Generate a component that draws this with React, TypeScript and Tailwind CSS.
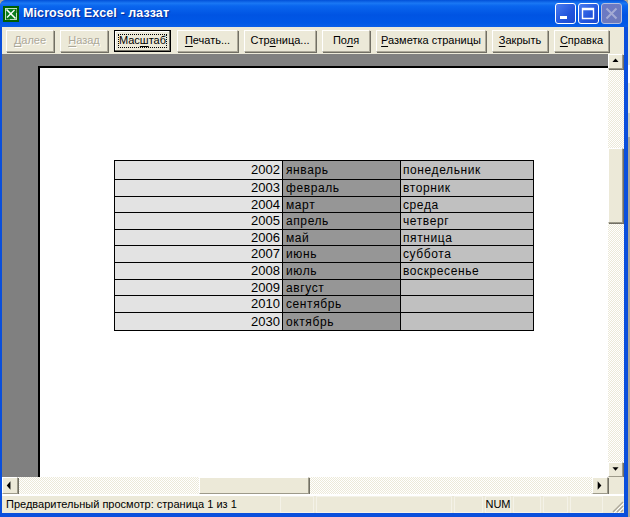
const uiFont = "font-['Liberation_Sans',sans-serif]";
const dither = "bg-[repeating-conic-gradient(#ece9d8_0_25%,#ffffff_0_50%)] bg-[length:2px_2px]";
const raised = "border border-t-white border-l-white border-r-[#9d9a8a] border-b-[#9d9a8a] bg-[#ece9d8] shadow-[1px_1px_0_#716f64]";

const rows = [
  { h: "h-[19px]", year: "2002", month: "январь", day: "понедельник" },
  { h: "h-[17px]", year: "2003", month: "февраль", day: "вторник" },
  { h: "h-[16px]", year: "2004", month: "март", day: "среда" },
  { h: "h-[17px]", year: "2005", month: "апрель", day: "четверг" },
  { h: "h-[16px]", year: "2006", month: "май", day: "пятница" },
  { h: "h-[17px]", year: "2007", month: "июнь", day: "суббота" },
  { h: "h-[17px]", year: "2008", month: "июль", day: "воскресенье" },
  { h: "h-[16px]", year: "2009", month: "август", day: "" },
  { h: "h-[17px]", year: "2010", month: "сентябрь", day: "" },
  { h: "h-[17px]", year: "2030", month: "октябрь", day: "" },
];

function ExcelIcon() {
  return (
    <svg width="16" height="16" viewBox="0 0 16 16" className="shrink-0">
      <rect width="16" height="16" fill="#005f00" />
      <rect x="2.5" y="2.5" width="11" height="11" fill="#0a7d1e" stroke="#bfe0bf" />
      <path d="M3.5 3.5 L12.5 12.5" stroke="#ffffff" strokeWidth="1.6" />
      <path d="M11.5 4 L4 11.5" stroke="#ffffff" strokeWidth="1.2" />
      <path d="M3 13h4M13 3v4" stroke="#005f00" strokeWidth="1" />
    </svg>
  );
}

function WinButton({ kind }: { kind: "min" | "max" | "close" }) {
  const face =
    kind === "close"
      ? "border-[#b6bede] bg-[linear-gradient(135deg,#6a78c8,#6f7bb8)]"
      : "border-white bg-[linear-gradient(135deg,#4a7cf0,#2254dc_60%,#1c4ad0)]";
  return (
    <div className={`flex size-[21px] items-center justify-center rounded-[3px] border ${face}`}>
      <svg width="15" height="15" viewBox="0 0 15 15">
        {kind === "min" && <rect x="2" y="10" width="7" height="3" fill="#fff" />}
        {kind === "max" && <path d="M1.5 2.5h11v10h-11z M1.5 3.5h11" fill="none" stroke="#fff" strokeWidth="1.4" />}
        {kind === "close" && <path d="M2.5 2.5 L12.5 12.5 M12.5 2.5 L2.5 12.5" stroke="#a4abd4" strokeWidth="2" />}
      </svg>
    </div>
  );
}

function ToolButton({ w, before, mnemonic, after, disabled, focused }: {
  w: string;
  before?: string;
  mnemonic: string;
  after?: string;
  disabled?: boolean;
  focused?: boolean;
}) {
  const frame = focused
    ? "border border-black bg-[#ece9d8] shadow-[inset_-1px_-1px_0_#716f64,inset_1px_1px_0_#fff]"
    : "border border-t-white border-l-white border-r-[#aca899] border-b-[#aca899] bg-[#ece9d8] shadow-[1px_1px_0_#716f64]";
  return (
    <button type="button" className={`relative flex h-[22px] shrink-0 items-center justify-center whitespace-nowrap text-[11px] ${w} ${frame} ${disabled ? "text-[#aca899] [text-shadow:1px_1px_0_#fff]" : "text-black"}`}>
      {focused && <span className="absolute inset-[3px] border border-dotted border-black" />}
      <span>{before}<span className="underline underline-offset-2">{mnemonic}</span>{after}</span>
    </button>
  );
}

function Arrow({ dir }: { dir: "up" | "down" | "left" | "right" }) {
  const pts = { up: "4,7 11,7 7.5,3", down: "4,4 11,4 7.5,8", left: "8,2 8,11 4,6.5", right: "5,2 5,11 9,6.5" }[dir];
  return (
    <svg width="15" height="13" viewBox="0 0 15 13"><polygon points={pts} fill="#000" /></svg>
  );
}

function StatusCell({ w, children }: { w: string; children?: string }) {
  return (
    <div className={`flex h-full shrink-0 items-center justify-center border border-[#f4f2e8] text-[11px] leading-none text-black ${w}`}>{children}</div>
  );
}

export default function App() {
  return (
    <div className={`flex h-[517px] w-[630px] overflow-hidden bg-[#aca899] ${uiFont}`}>
      <div className="flex h-full w-[628px] shrink-0 flex-col rounded-t-[6px] bg-[#0a4fdc]">
        {/* title bar */}
        <div className="flex h-[27px] shrink-0 items-center rounded-t-[6px] bg-[linear-gradient(180deg,#0250d8_0%,#1a78f4_12%,#0a66ee_22%,#0054e3_55%,#0058e6_85%,#0a5ee8_100%)] pl-[3px] pr-[6px]">
          <ExcelIcon />
          <span className="ml-[4px] whitespace-nowrap text-[12.5px] font-bold tracking-[0.1px] text-white [text-shadow:1px_1px_1px_#0a2a90]">Microsoft Excel - лаззат</span>
          <div className="ml-auto flex gap-[2px]">
            <WinButton kind="min" />
            <WinButton kind="max" />
            <WinButton kind="close" />
          </div>
        </div>

        <div className="flex min-h-0 flex-1 flex-col pb-[4px] pl-[2px] pr-[4px]">
          {/* toolbar */}
          <div className="flex h-[27px] shrink-0 items-center gap-[6px] bg-[#ece9d8] pl-[4px]">
            <ToolButton w="w-[48px]" mnemonic="Д" after="алее" disabled />
            <ToolButton w="w-[48px]" mnemonic="Н" after="азад" disabled />
            <ToolButton w="w-[57px]" before="Мас" mnemonic="ш" after="таб" focused />
            <ToolButton w="w-[61px]" mnemonic="П" after="ечать..." />
            <ToolButton w="w-[72px]" before="Стр" mnemonic="а" after="ница..." />
            <ToolButton w="w-[48px]" before="По" mnemonic="л" after="я" />
            <ToolButton w="w-[110px]" mnemonic="Р" after="азметка страницы" />
            <ToolButton w="w-[56px]" mnemonic="З" after="акрыть" />
            <ToolButton w="w-[55px]" mnemonic="С" after="правка" />
          </div>

          {/* preview area */}
          <div className="flex min-h-0 flex-1">
            <div className="flex min-w-0 flex-1 flex-col bg-[#808080] pl-[36px] pt-[12px]">
              <div className="flex-1 border-l-2 border-t-2 border-black bg-white pl-[74px] pt-[92px]">
                <div className="w-[420px] border border-black text-[12px] tracking-[0.6px] text-black">
                  {rows.map((row, i) => (
                    <div key={row.year} className={`flex ${row.h} ${i < rows.length - 1 ? "border-b border-black" : ""}`}>
                      <div className="flex w-[167px] shrink-0 items-center justify-end bg-[#e3e3e3] pr-[2px] text-[13px] tracking-normal">{row.year}</div>
                      <div className="flex w-[118px] shrink-0 items-center border-l border-black bg-[#969696] pl-[3px]">{row.month}</div>
                      <div className="flex flex-1 items-center border-l border-black bg-[#c0c0c0] pl-[2px]">{row.day}</div>
                    </div>
                  ))}
                </div>
              </div>
            </div>

            {/* vertical scrollbar */}
            <div className={`flex w-[16px] shrink-0 flex-col pr-[1px] ${dither}`}>
              <div className={`flex h-[15px] shrink-0 items-center justify-center ${raised}`}><Arrow dir="up" /></div>
              <div className={`mt-[79px] h-[75px] shrink-0 ${raised}`} />
              <div className={`mt-auto flex h-[15px] shrink-0 items-center justify-center ${raised}`}><Arrow dir="down" /></div>
            </div>
          </div>

          {/* horizontal scrollbar */}
          <div className="flex h-[17px] shrink-0 bg-[#ece9d8]">
            <div className={`flex min-w-0 flex-1 ${dither}`}>
              <div className={`flex w-[16px] shrink-0 items-center justify-center ${raised}`}><Arrow dir="left" /></div>
              <div className={`ml-[181px] w-[110px] shrink-0 ${raised}`} />
              <div className={`ml-auto flex w-[16px] shrink-0 items-center justify-center ${raised}`}><Arrow dir="right" /></div>
            </div>
            <div className="w-[16px] shrink-0" />
          </div>

          {/* status bar */}
          <div className="relative flex h-[19px] shrink-0 items-center gap-[2px] border-t-2 border-white bg-[#ece9d8] pl-[278px] pr-[20px]">
            <span className="absolute left-[4px] top-0 whitespace-nowrap text-[11px] leading-[17px] text-black">Предварительный просмотр: страница 1 из 1</span>
            <StatusCell w="w-[34px]" />
            <StatusCell w="w-[136px]" />
            <StatusCell w="w-[29px]" />
            <StatusCell w="w-[26px]">NUM</StatusCell>
            <StatusCell w="w-[28px]" />
            <StatusCell w="w-[25px]" />
            <StatusCell w="w-[33px]" />
            <svg width="13" height="13" viewBox="0 0 13 13" className="absolute bottom-0 right-0">
              <path d="M12 2 L2 12 M12 6 L6 12 M12 10 L10 12" stroke="#aca899" strokeWidth="1.4" />
              <path d="M13 3 L3 13 M13 7 L7 13" stroke="#fff" strokeWidth="1" />
            </svg>
          </div>
        </div>
      </div>

      {/* sliver of the desktop behind the window */}
      <div className="flex h-full flex-1 flex-col">
        <div className="h-[65px] bg-[#ece9d8]" />
        <div className="h-[18px] bg-white" />
        <div className="h-[30px] bg-[#ece9d8]" />
        <div className="h-[24px] bg-[#d0cdbd]" />
        <div className="flex-1 bg-[#aca899]" />
      </div>
    </div>
  );
}
